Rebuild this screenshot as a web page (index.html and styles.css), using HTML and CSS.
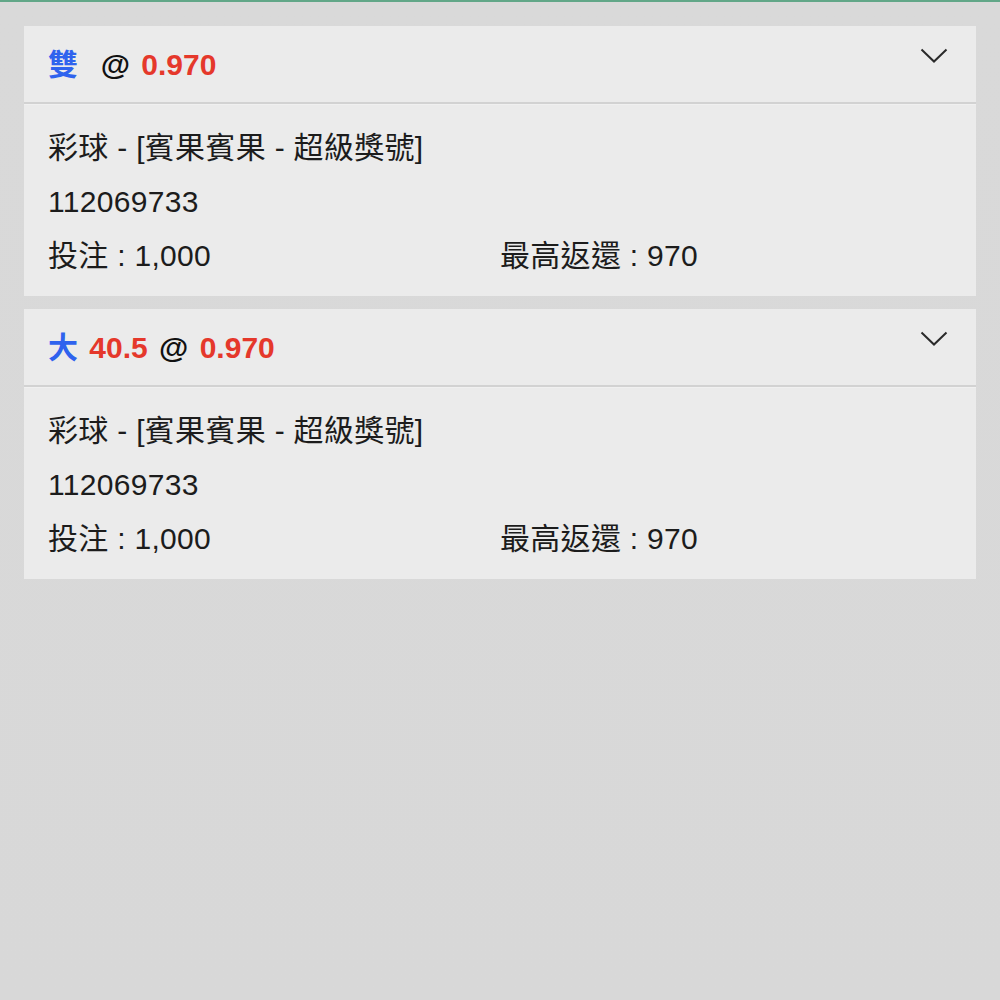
FILE: index.html
```html
<!DOCTYPE html>
<html lang="zh-Hant">
<head>
<meta charset="utf-8">
<link rel="stylesheet" href="styles.css">
</head>
<body>
<div class="topline"></div>
<main class="list">
  <section class="card">
    <header class="card-head">
      <div class="title"><span class="blue">雙</span>&nbsp; <span class="dark">@</span> <span class="red">0.970</span></div>
      <svg class="chev" width="28" height="16" viewBox="0 0 28 16"><path d="M1.5 1.5 L14 13.5 L26.5 1.5" fill="none" stroke="#2a2a2a" stroke-width="2"/></svg>
    </header>
    <div class="card-body">
      <div class="row">彩球 - [賓果賓果 - 超級獎號]</div>
      <div class="row">112069733</div>
      <div class="row cols"><span>投注 : 1,000</span><span>最高返還 : 970</span></div>
    </div>
  </section>
  <section class="card">
    <header class="card-head">
      <div class="title"><span class="blue">大</span> <span class="red">40.5</span> <span class="dark">@</span> <span class="red">0.970</span></div>
      <svg class="chev" width="28" height="16" viewBox="0 0 28 16"><path d="M1.5 1.5 L14 13.5 L26.5 1.5" fill="none" stroke="#2a2a2a" stroke-width="2"/></svg>
    </header>
    <div class="card-body">
      <div class="row">彩球 - [賓果賓果 - 超級獎號]</div>
      <div class="row">112069733</div>
      <div class="row cols"><span>投注 : 1,000</span><span>最高返還 : 970</span></div>
    </div>
  </section>
</main>
</body>
</html>
```
FILE: styles.css
```css
html, body {
  margin: 0;
  padding: 0;
}
body {
  width: 1000px;
  height: 1000px;
  background: linear-gradient(180deg, #d9d9d9 0%, #d8d8d8 100%);
  font-family: "Liberation Sans", "Noto Sans CJK TC", sans-serif;
  color: #1c1c1c;
  overflow: hidden;
}
.topline {
  height: 2px;
  background: #62a788;
}
.list {
  padding: 24px 24px 0 24px;
  display: flex;
  flex-direction: column;
  gap: 13px;
}
.card {
  background: #ebebeb;
}
.card-head {
  display: flex;
  align-items: center;
  justify-content: space-between;
  padding: 0 28px 5px 24px;
  border-bottom: 2px solid #d2d2d2;
  box-sizing: border-box;
  height: 78px;
}
.title {
  font-size: 30px;
  font-weight: bold;
  white-space: pre;
  word-spacing: 3px;
}
.blue { color: #2f63ee; }
.red { color: #e5382b; }
.dark { color: #111; }
.chev {
  align-self: flex-start;
  margin-top: 22px;
}
.card-body {
  padding: 16px 24px 13px 24px;
  border-top: 1px solid #f0f0f0;
}
.row {
  font-size: 30px;
  line-height: 54px;
  height: 54px;
  letter-spacing: 0.3px;
}
.cols {
  display: grid;
  grid-template-columns: 1fr 1fr;
}
```
